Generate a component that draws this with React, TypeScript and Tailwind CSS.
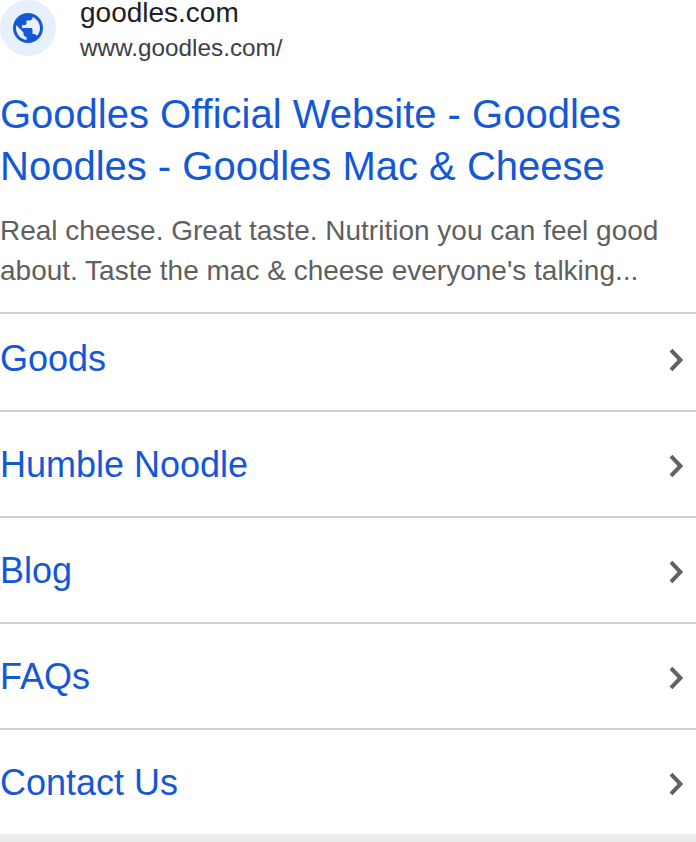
const rows = ["Goods", "Humble Noodle", "Blog", "FAQs", "Contact Us"];

function Chevron() {
  return (
    <svg width="14" height="24" viewBox="0 0 14 24" fill="none" className="shrink-0 mt-[2px]">
      <path d="M2 2.2L11.4 12L2 21.8" stroke="#5f6368" strokeWidth="4" />
    </svg>
  );
}

export default function App() {
  return (
    <div className="w-[696px] h-[842px] overflow-hidden bg-white flex flex-col font-['Liberation_Sans',sans-serif]">
      <div className="flex h-[88px] shrink-0 gap-6">
        <div className="w-14 h-14 rounded-full bg-[#e8f0fe] flex items-center justify-center shrink-0">
          <svg width="36" height="36" viewBox="0 0 24 24" fill="#1558d6">
            <path d="M12 2C6.48 2 2 6.48 2 12s4.48 10 10 10 10-4.48 10-10S17.52 2 12 2zM4 12c0-.61.08-1.21.21-1.78L8.99 15v1c0 1.1.9 2 2 2v1.93C7.06 19.43 4 16.07 4 12zm13.89 5.4c-.26-.81-1-1.4-1.9-1.4h-1v-3c0-.55-.45-1-1-1h-6v-2h2c.55 0 1-.45 1-1V7h2c1.1 0 2-.9 2-2v-.41C17.92 5.77 20 8.65 20 12c0 2.08-.81 3.98-2.11 5.4z" />
          </svg>
        </div>
        <div className="flex flex-col">
          <div className="text-[28px] leading-[28px] text-[#202124] -mt-[1px]">goodles.com</div>
          <div className="text-[24.3px] leading-[28px] mt-[7px] text-[#3c4043]">www.goodles.com/</div>
        </div>
      </div>
      <div className="text-[40px] leading-[52px] text-[#1558d6] h-[104px] shrink-0">
        Goodles Official Website - Goodles<br />Noodles - Goodles Mac &amp; Cheese
      </div>
      <div className="mt-[19px] text-[28px] leading-[40px] text-[#5f5f5f] h-[103px] shrink-0 border-b-2 border-[#d2d2d2]">
        Real cheese. Great taste. Nutrition you can feel good<br />about. Taste the mac &amp; cheese everyone's talking...
      </div>
      <div className="flex flex-col">
        {rows.map((r, i) => (
          <div
            key={r}
            className={`flex items-center justify-between pr-[13px] text-[36px] text-[#1558d6] ${i === 0 ? "h-[98px] pb-[6px]" : i === 4 ? "h-[104px] pt-[2px]" : "h-[106px] pt-[2px]"} ${i < 4 ? "border-b-2 border-[#d2d2d2]" : ""}`}
          >
            <span>{r}</span>
            <Chevron />
          </div>
        ))}
      </div>
      <div className="flex-1 bg-[#ebebeb] rounded-t-[3px]" />
    </div>
  );
}
